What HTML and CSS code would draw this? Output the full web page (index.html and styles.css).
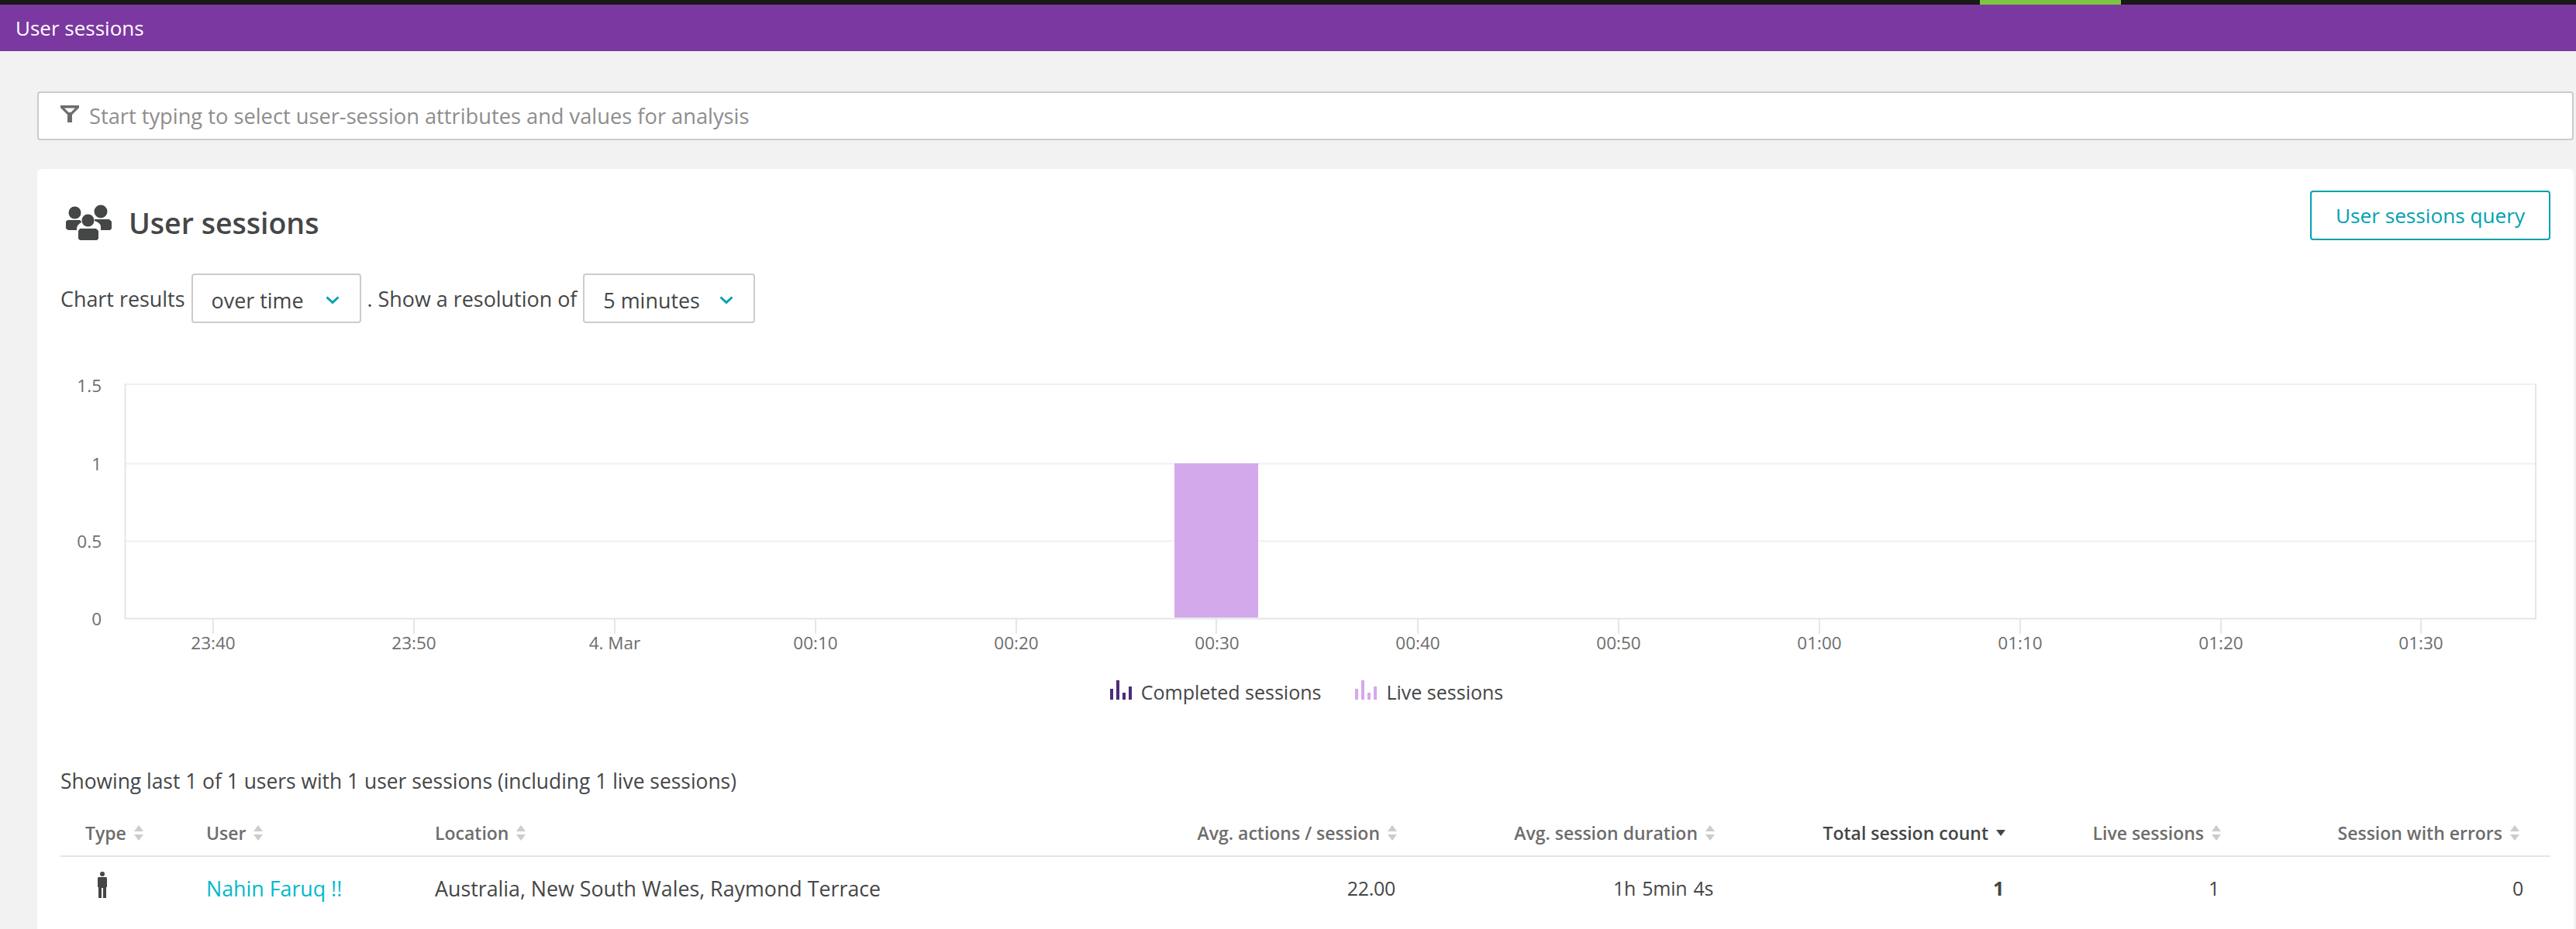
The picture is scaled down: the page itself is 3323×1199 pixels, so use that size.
FILE: index.html
```html
<!DOCTYPE html>
<html lang="en">
<head>
<meta charset="utf-8">
<title>User sessions</title>
<link rel="stylesheet" href="styles.css">
</head>
<body>
<div class="topbar"><span class="topbar-active"></span></div>
<header class="titlebar">User sessions</header>
<main class="main">
  <div class="filter">
    <svg class="filter-icon" viewBox="0 0 24 22"><path d="M0 0H24V3L15 12V22H9V12L0 3ZM5 3.500L10.500 9H13.500L19 3.500Z" fill-rule="evenodd"/></svg>
    <span>Start typing to select user-session attributes and values for analysis</span>
  </div>
  <section class="card">
    <div class="card-head">
      <h1 class="card-title">
        <svg class="users-icon" viewBox="0 0 60 46">
          <circle cx="12.500" cy="10.500" r="8"/><circle cx="46" cy="9" r="8.500"/>
          <path d="M3 20H19L21 22V23C17 25 15 28 15 31V33H4L1 31V22Z"/>
          <path d="M38 19H57L60 22V31L58 33H46V29C46 25 43 23 38 21Z"/>
          <circle cx="29.500" cy="20.500" r="8"/>
          <path d="M19 31H40L43 34V44L41 46H19L17 44V34Z"/>
        </svg>
        User sessions
      </h1>
      <a class="query-btn" href="#">User sessions query</a>
    </div>
    <div class="controls">
      <span>Chart results</span>
      <span class="select select-time">over time<svg class="chev" viewBox="0 0 18 11"><path d="M1.500 1.500L9 8.500L16.500 1.500"/></svg></span>
      <span>. Show a resolution of</span>
      <span class="select select-res">5 minutes<svg class="chev" viewBox="0 0 18 11"><path d="M1.500 1.500L9 8.500L16.500 1.500"/></svg></span>
    </div>
    <svg class="chart" viewBox="0 0 3271 412" width="3271" height="412">
      <g class="grid">
        <path d="M114 32H3223M114 134.500H3223M114 234.500H3223"/>
      </g>
      <rect class="bar" x="1467" y="134" width="108" height="199"/>
      <g class="axis">
        <path d="M113.500 31V334.500H3223V31"/>
        <path d="M227 335V354M486 335V354M745 335V354M1004 335V354M1263 335V354M1521 335V354M1781 335V354M2040 335V354M2299 335V354M2558 335V354M2817 335V354M3075 335V354"/>
      </g>
      <g class="tick-y">
        <text x="83" y="42">1.5</text><text x="83" y="143">1</text><text x="83" y="243">0.5</text><text x="83" y="343">0</text>
      </g>
      <g class="tick-x">
        <text x="227" y="374">23:40</text><text x="486" y="374">23:50</text><text x="745" y="374">4. Mar</text><text x="1004" y="374">00:10</text><text x="1263" y="374">00:20</text><text x="1522" y="374">00:30</text><text x="1781" y="374">00:40</text><text x="2040" y="374">00:50</text><text x="2299" y="374">01:00</text><text x="2558" y="374">01:10</text><text x="2817" y="374">01:20</text><text x="3075" y="374">01:30</text>
      </g>
    </svg>
    <div class="legend">
      <span class="legend-item legend-done"><svg class="legend-icon" viewBox="0 0 28 25"><path d="M0 11H4V25H0ZM8 0H12V25H8ZM16 16H20V25H16ZM24 8H28V25H24Z"/></svg>Completed sessions</span>
      <span class="legend-item legend-live"><svg class="legend-icon" viewBox="0 0 28 25"><path d="M0 11H4V25H0ZM8 0H12V25H8ZM16 16H20V25H16ZM24 8H28V25H24Z"/></svg>Live sessions</span>
    </div>
    <p class="summary">Showing last 1 of 1 users with 1 user sessions (including 1 live sessions)</p>
    <div class="table">
      <div class="row row-head">
        <span class="cell cell-type">Type<svg class="sort" viewBox="0 0 12 20"><path class="sort-off" d="M6 0L12 8H0ZM0 12H12L6 20Z"/></svg></span>
        <span class="cell">User<svg class="sort" viewBox="0 0 12 20"><path class="sort-off" d="M6 0L12 8H0ZM0 12H12L6 20Z"/></svg></span>
        <span class="cell">Location<svg class="sort" viewBox="0 0 12 20"><path class="sort-off" d="M6 0L12 8H0ZM0 12H12L6 20Z"/></svg></span>
        <span class="cell cell-r">Avg. actions / session<svg class="sort" viewBox="0 0 12 20"><path class="sort-off" d="M6 0L12 8H0ZM0 12H12L6 20Z"/></svg></span>
        <span class="cell cell-r">Avg. session duration<svg class="sort" viewBox="0 0 12 20"><path class="sort-off" d="M6 0L12 8H0ZM0 12H12L6 20Z"/></svg></span>
        <span class="cell cell-r cell-active">Total session count<svg class="sort sort-down" viewBox="0 0 12 8"><path d="M0 0H12L6 8Z"/></svg></span>
        <span class="cell cell-r">Live sessions<svg class="sort" viewBox="0 0 12 20"><path class="sort-off" d="M6 0L12 8H0ZM0 12H12L6 20Z"/></svg></span>
        <span class="cell cell-r">Session with errors<svg class="sort" viewBox="0 0 12 20"><path class="sort-off" d="M6 0L12 8H0ZM0 12H12L6 20Z"/></svg></span>
      </div>
      <div class="row row-data">
        <span class="cell cell-type"><svg class="person" viewBox="0 0 12 34"><circle cx="6" cy="3" r="3"/><path d="M1 7H11L12 8V20H11V34H7V21H5V34H1V20H0V8Z"/></svg></span>
        <span class="cell"><a class="user-link" href="#">Nahin Faruq !!</a></span>
        <span class="cell">Australia, New South Wales, Raymond Terrace</span>
        <span class="cell cell-r cell-num">22.00</span>
        <span class="cell cell-r cell-num">1h 5min 4s</span>
        <span class="cell cell-r cell-num cell-strong">1</span>
        <span class="cell cell-r cell-num">1</span>
        <span class="cell cell-r cell-num cell-last">0</span>
      </div>
    </div>
  </section>
</main>
</body>
</html>
```
FILE: styles.css
```css
* { box-sizing: border-box; }
html, body { margin: 0; height: 100%; }
body {
  width: 3323px;
  height: 1199px;
  overflow: hidden;
  background: #f2f2f2;
  color: #454646;
  font-family: "Open Sans", "Noto Sans", sans-serif;
  font-size: 27px;
}
.topbar { height: 6px; background: #191919; display: flex; }
.topbar-active { width: 182px; margin-left: 2554px; background: #7dc540; }
.titlebar {
  height: 60px;
  background: #7c38a1;
  color: #fff;
  font-size: 26px;
  line-height: 60px;
  padding-left: 20px;
}
.main { padding: 52px 3px 0 48px; }
.filter {
  height: 63px;
  border: 2px solid #cccccc;
  border-radius: 4px;
  background: #fff;
  display: flex;
  align-items: center;
  padding-left: 28px;
  gap: 13px;
  color: #8d8d8d;
  font-size: 27.250px;
}
.filter-icon { width: 24px; height: 22px; fill: #6d6d6d; margin-top: -6px; }
.card {
  margin-top: 37px;
  background: #fff;
  border-radius: 6px;
  padding: 28px 30px 0 30px;
  height: 1000px;
}
.card-head { display: flex; justify-content: space-between; align-items: flex-start; }
.card-title {
  margin: 18px 0 -2px 6px;
  display: flex;
  align-items: center;
  gap: 22px;
  font-size: 37.500px;
  font-weight: 600;
  line-height: 45px;
  color: #454646;
}
.users-icon { width: 60px; height: 46px; fill: #454646; }
.query-btn {
  width: 310px;
  height: 64px;
  border: 2px solid #00a1b2;
  border-radius: 4px;
  color: #00a1b2;
  font-size: 26.200px;
  display: flex;
  align-items: center;
  justify-content: center;
  text-decoration: none;
}
.controls {
  margin-top: 43px;
  display: flex;
  align-items: center;
  gap: 8px;
  font-size: 26.900px;
}
.select {
  height: 64px;
  border: 2px solid #cccccc;
  border-radius: 4px;
  display: flex;
  align-items: center;
  justify-content: space-between;
  padding: 4px 26px 0 24px;
}
.select-time { width: 219px; }
.select-res { width: 222px; }
.chev { width: 18px; height: 11px; fill: none; stroke: #00a1b2; stroke-width: 3; }
.chart { display: block; margin: 47px 0 0 -30px; }
.grid path { fill: none; stroke: #f0f0f0; stroke-width: 2; }
.axis path { fill: none; stroke: #e6e6e6; stroke-width: 2; }
.bar { fill: #d3a9ec; }
.tick-y text { text-anchor: end; font-size: 22.500px; fill: #6d6d6d; }
.tick-x text { text-anchor: middle; font-size: 22.500px; fill: #6d6d6d; }
.legend {
  display: flex;
  justify-content: center;
  gap: 44px;
  font-size: 25px;
  padding-left: 3px;
}
.legend-item { display: flex; align-items: center; gap: 12px; }
.legend-icon { width: 28px; height: 25px; margin-top: -6px; }
.legend-done .legend-icon { fill: #4b2d77; }
.legend-live .legend-icon { fill: #d3a9ec; }
.summary { margin: 82px 0 0; font-size: 26.400px; line-height: 32px; }
.row {
  display: grid;
  grid-template-columns: 188px 295px 839px 442px 410px 375px 278px 385px;
  align-items: center;
}
.row-head {
  height: 60px;
  margin-top: 22px;
  border-bottom: 2px solid #e6e6e6;
  color: #6d6d6d;
  font-size: 23px;
  font-weight: 600;
}
.row-data { height: 80px; font-size: 26.800px; }
.cell { display: flex; align-items: center; gap: 10px; white-space: nowrap; }
.cell-type { padding-left: 32px; }
.cell-r { justify-content: flex-end; padding-right: 40px; }
.row-data .cell-r { padding-right: 42px; }
.row-data .cell-last { padding-right: 35px; }
.cell-num { font-size: 25px; letter-spacing: -0.3px; word-spacing: 2px; }
.cell-active { color: #454646; }
.cell-strong { font-weight: 700; }
.sort { width: 12px; height: 20px; flex: none; }
.sort-off { fill: #cccccc; }
.sort-down { height: 8px; fill: #454646; }
.person { width: 12px; height: 34px; fill: #454646; margin: -8px 0 0 16px; }
.user-link { color: #00b9cc; text-decoration: none; }
```
